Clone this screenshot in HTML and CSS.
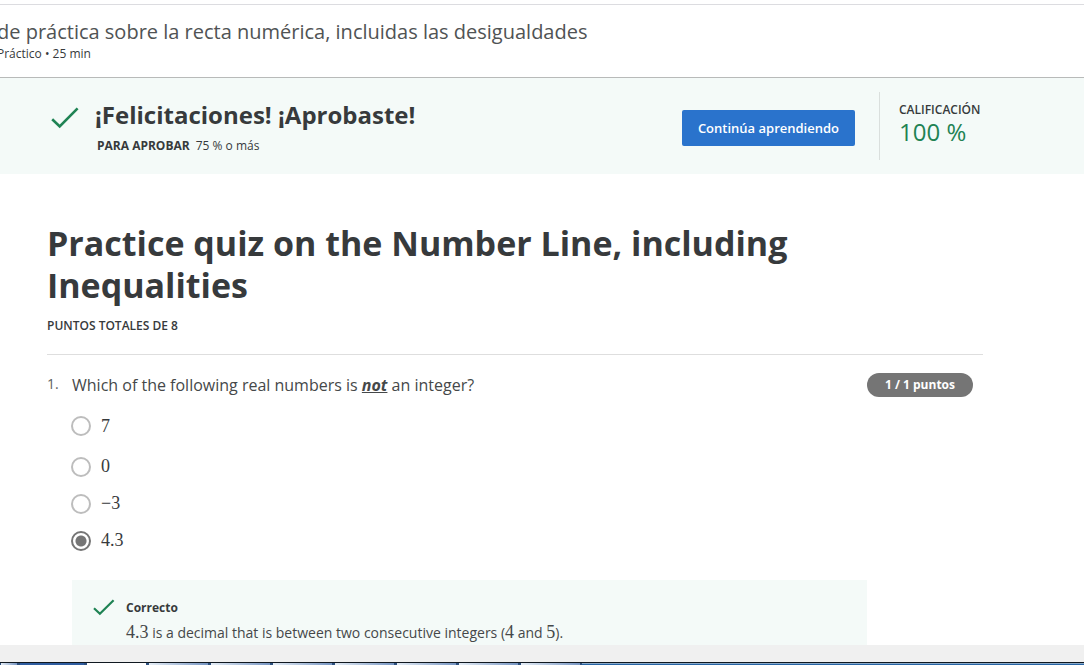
FILE: index.html
```
<!DOCTYPE html>
<html lang="es">
<head>
<meta charset="utf-8">
<title>Cuestionario de práctica</title>
<link rel="stylesheet" href="styles.css">
</head>
<body>
<div class="viewport">
  <header class="topbar">
    <div class="topbar-title">de práctica sobre la recta numérica, incluidas las desigualdades</div>
    <div class="topbar-meta">Práctico • 25 min</div>
  </header>
  <section class="banner">
    <svg class="banner-check" viewBox="0 0 28 22" aria-hidden="true"><path d="M1.2 12.2 8.7 19.4 26.6 1.4"/></svg>
    <div class="banner-text">
      <h2 class="banner-title">¡Felicitaciones! ¡Aprobaste!</h2>
      <p class="banner-pass"><strong>PARA APROBAR</strong><span>75 % o más</span></p>
    </div>
    <button class="continue" type="button">Continúa aprendiendo</button>
    <div class="grade">
      <div class="grade-label">CALIFICACIÓN</div>
      <div class="grade-value">100 %</div>
    </div>
  </section>
  <main class="quiz">
    <h1 class="quiz-title">Practice quiz on the Number Line, including Inequalities</h1>
    <div class="quiz-points">PUNTOS TOTALES DE 8</div>
    <section class="question">
      <div class="number">1.</div>
      <div class="question-body">
        <p class="prompt" id="prompt">Which of the following real numbers is <em>not</em> an integer?</p>
        <div class="options" role="radiogroup" aria-labelledby="prompt">
          <label class="option option-first"><input type="radio" name="answer"><span class="math">7</span></label>
          <label class="option"><input type="radio" name="answer"><span class="math">0</span></label>
          <label class="option"><input type="radio" name="answer"><span class="math">−3</span></label>
          <label class="option"><input type="radio" name="answer" checked><span class="math">4.3</span></label>
        </div>
        <div class="feedback">
          <svg class="feedback-check" viewBox="0 0 22 17" aria-hidden="true"><path d="M1 9.2 6.9 14.8 20.6 1.2"/></svg>
          <div>
            <div class="feedback-title">Correcto</div>
            <p class="feedback-text"><span class="math">4.3</span> is a decimal that is between two consecutive integers (<span class="math">4</span> and <span class="math">5</span>).</p>
          </div>
        </div>
      </div>
      <div class="points">1 / 1 puntos</div>
    </section>
  </main>
</div>
<div class="statusbar"></div>
<div class="taskbar">
  <i class="task task-start"></i><i class="task task-dark"></i><i class="task task-active"></i><i class="task"></i><i class="task"></i><i class="task"></i><i class="task"></i><i class="task"></i><i class="task"></i><i class="task"></i>
</div>
</body>
</html>
```

FILE: styles.css
```
* { box-sizing: border-box; }
body {
  margin: 0;
  height: 100vh;
  display: flex;
  flex-direction: column;
  overflow: hidden;
  background: #fff;
  color: #373a3c;
  font-family: "Open Sans", "Noto Sans", sans-serif;
  font-size: 14px;
}
h1, h2, p { margin: 0; }
.viewport { flex: 1; min-height: 0; overflow: hidden; padding-top: 4px; }

.topbar {
  height: 74px;
  padding-top: 14px;
  border-top: 1px solid #dcdce0;
  border-bottom: 1px solid #b8bab9;
}
.topbar-title, .topbar-meta { margin-left: -3px; white-space: nowrap; }
.topbar-title { font-size: 20px; line-height: 26px; color: #505354; }
.topbar-meta { font-size: 12px; line-height: 18px; }

.banner {
  display: flex;
  align-items: center;
  padding: 14px 18px 14px 51px;
  background: #f4faf8;
}
.banner-check { width: 28px; height: 22px; margin-right: 16px; margin-bottom: 16px; }
.banner-check path, .feedback-check path { fill: none; stroke: #1f8354; stroke-width: 2.6; }
.banner-text { flex: 1; padding-top: 5px; }
.banner-title { font-size: 24px; line-height: 32px; font-weight: 700; }
.banner-pass { display: flex; gap: 6px; padding-left: 2px; margin-top: 3px; font-size: 12px; line-height: 24px; }
.banner-pass strong { font-weight: 700; }
.continue {
  height: 36px;
  padding: 0 16px;
  margin-top: 4px;
  margin-right: 24px;
  border: 0;
  border-radius: 2px;
  background: #2a73cc;
  color: #fff;
  font: 600 13px/18px "Open Sans", sans-serif;
}
.grade {
  width: 187px;
  height: 68px;
  padding: 10px 0 0 19px;
  border-left: 1px solid #dadfdd;
}
.grade-label { font-size: 12px; line-height: 16px; font-weight: 600; }
.grade-value { font-size: 24px; line-height: 28px; color: #1f8354; }

.quiz { padding: 48px 101px 0 47px; }
.quiz-title { max-width: 820px; font-size: 34px; line-height: 42px; font-weight: 700; }
.quiz-points {
  padding: 10px 0 18px;
  border-bottom: 1px solid #dedede;
  font-size: 12px;
  line-height: 20px;
  font-weight: 600;
}
.question { display: flex; align-items: flex-start; padding-top: 18px; }
.number { width: 25px; line-height: 22px; color: #5c5f60; }
.question-body { flex: 1; }
.prompt { font-size: 16px; line-height: 24px; color: #454849; }
.prompt em { font-weight: 700; text-decoration: underline; }
.points {
  padding: 0 18px;
  margin-right: 10px;
  border-radius: 12px;
  background: #757575;
  color: #fff;
  font-size: 12px;
  line-height: 24px;
  font-weight: 700;
}
.options { padding-top: 19px; }
.option { display: flex; gap: 10px; height: 37px; }
.option-first { height: 41px; }
.option input {
  appearance: none;
  width: 20px;
  height: 20px;
  margin: 0 0 0 -1px;
  border: 2px solid #bdbdbd;
  border-radius: 50%;
}
.option input:checked {
  border-color: #757575;
  background: radial-gradient(circle, #757575 5px, #fff 6px);
}
.math { font-family: "Liberation Serif", serif; font-size: 18px; line-height: 20px; }
.option .math { line-height: 18px; }
.option-first .math { line-height: 20px; }
.feedback { display: flex; gap: 11px; min-height: 90px; margin-top: 12px; padding: 17px 20px 17px 21px; background: #f4faf8; }
.feedback-check { width: 22px; height: 17px; margin-top: 2px; }
.feedback-check path { stroke-width: 2.2; }
.feedback-title { font-size: 12px; line-height: 22px; font-weight: 700; }
.feedback-text { line-height: 20px; padding-top: 3px; color: #454849; }

.statusbar { height: 17px; background: #f0f0f0; }
.taskbar {
  display: flex;
  height: 3px;
  border-top: 1px solid #101820;
  background: linear-gradient(#8aa9c8 1px, #2765a5 1px);
}
.task {
  width: 62px;
  border: solid #2d507e;
  border-width: 0 2px 0 1px;
  background: linear-gradient(90deg, #e5edf5, #7796c3);
}
.task-start { width: 19px; }
.task-dark { width: 67px; background: #2f5da0; }
.task-active { background: #fff; }
```
